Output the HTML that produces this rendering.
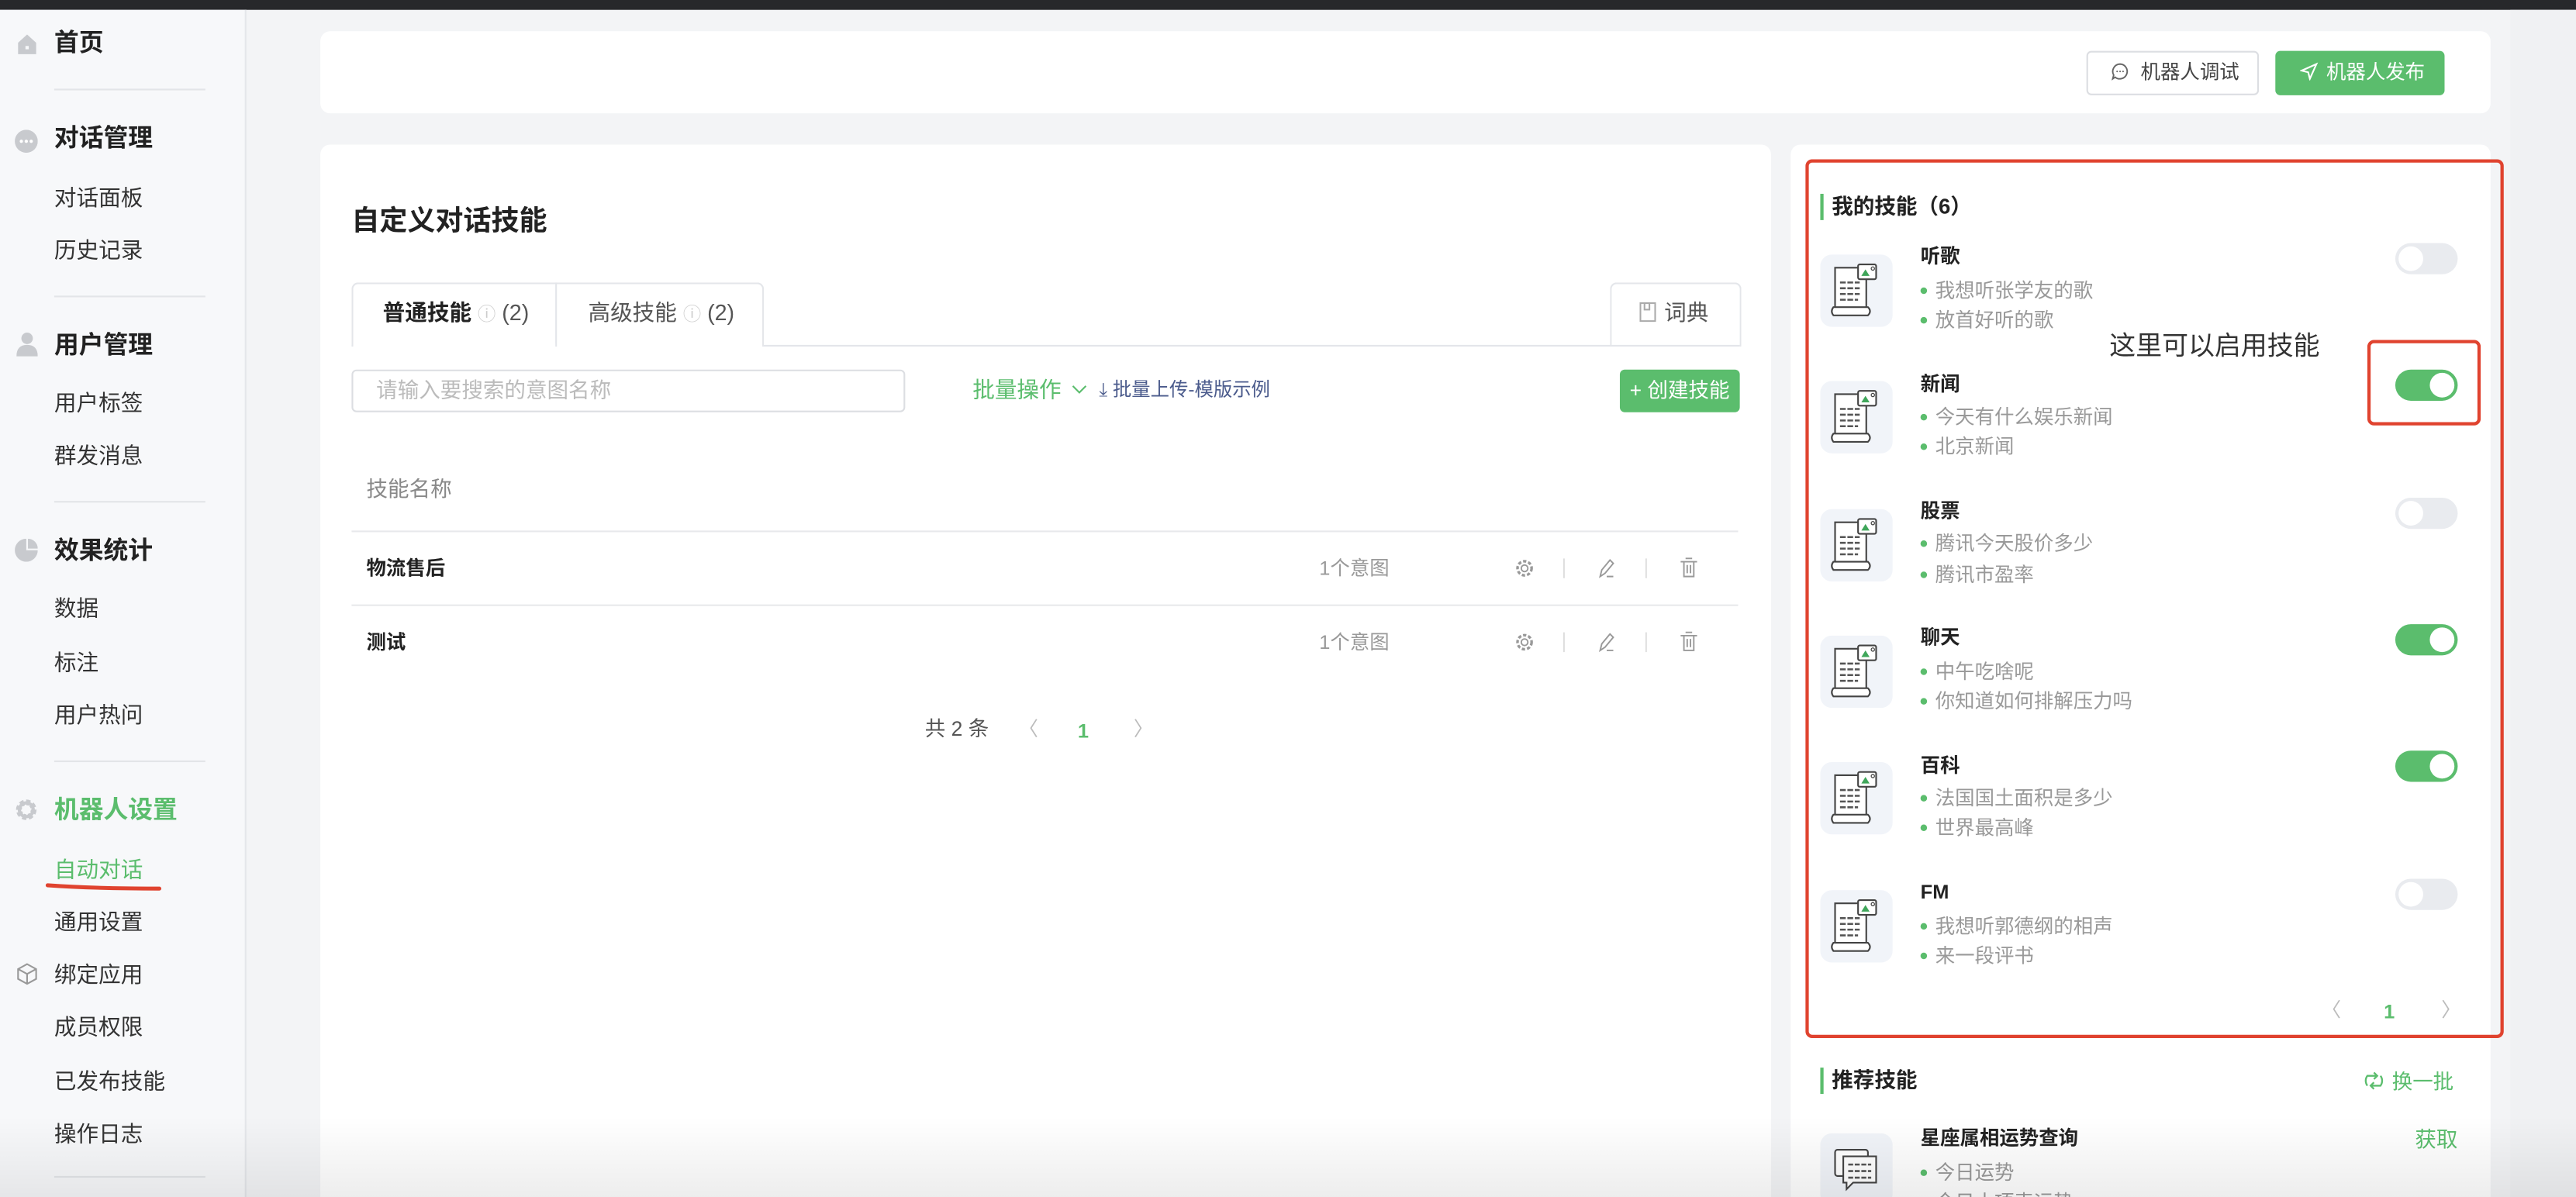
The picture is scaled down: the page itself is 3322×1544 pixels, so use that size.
<!DOCTYPE html>
<html><head><meta charset="utf-8">
<style>
html,body{margin:0;padding:0;width:3322px;height:1544px;overflow:hidden;background:#f3f4f6}
#w{position:absolute;left:0;top:0;width:1568px;height:729px;transform:scale(2.11862);transform-origin:0 0;font-family:"Liberation Sans","Noto Sans CJK SC",sans-serif;color:#333;background:#f3f4f6;overflow:hidden}
.a{position:absolute}
.t{position:absolute;white-space:nowrap;line-height:20px}
.card{position:absolute;background:#fff;border-radius:6px}
.div{position:absolute;left:33px;width:92px;height:1px;background:#e3e5e8}
.sh{font-size:15px;font-weight:bold;color:#222}
.si{font-size:13.5px;color:#333}
.tg{position:absolute;width:38px;height:19px;border-radius:10px;background:#e9ebef}
.tg::after{content:"";position:absolute;left:2px;top:2px;width:15px;height:15px;border-radius:50%;background:#fff}
.tg.on{background:#5bbd6d}
.tg.on::after{left:21px}
.ib{position:absolute;width:44px;height:44px;border-radius:7px;background:#f1f4f9}
.b{font-size:12px;color:#999}
.b::before{content:"";display:inline-block;width:4px;height:4px;border-radius:50%;background:#5bbd6d;margin-right:5px;vertical-align:middle;position:relative;top:-1px}
.it{font-size:12px;font-weight:bold;color:#222}
</style></head><body>
<div id="w">
<div class="a" style="left:0;top:0;width:1568px;height:6px;background:#27282b"></div>
<!-- sidebar -->
<div class="a" style="left:0;top:6px;width:149px;height:723px;background:#f7f8fa;border-right:1px solid #e4e6ea"></div>
<svg class="a" style="left:10px;top:20px" width="13" height="14" viewBox="0 0 13 14"><path d="M1 6 L6.5 1 L12 6 V13 H1Z" fill="#c8cace"/><rect x="5.5" y="8" width="2" height="2" fill="#f7f8fa"/></svg>
<div class="t sh" style="left:33px;top:17px">首页</div>
<div class="div" style="top:54px"></div>
<svg class="a" style="left:9px;top:79px" width="14" height="14"><circle cx="7" cy="7" r="7" fill="#c8cace"/><circle cx="4" cy="7" r="1" fill="#fff"/><circle cx="7" cy="7" r="1" fill="#fff"/><circle cx="10" cy="7" r="1" fill="#fff"/></svg>
<div class="t sh" style="left:33px;top:75px">对话管理</div>
<div class="t si" style="left:33px;top:111px">对话面板</div>
<div class="t si" style="left:33px;top:143px">历史记录</div>
<div class="div" style="top:180px"></div>
<svg class="a" style="left:10px;top:202px" width="13" height="15"><circle cx="6.5" cy="4" r="3.5" fill="#c8cace"/><path d="M0 15 Q0 8 6.5 8 Q13 8 13 15Z" fill="#c8cace"/></svg>
<div class="t sh" style="left:33px;top:201px">用户管理</div>
<div class="t si" style="left:33px;top:236px">用户标签</div>
<div class="t si" style="left:33px;top:268px">群发消息</div>
<div class="div" style="top:305px"></div>
<svg class="a" style="left:9px;top:328px" width="14" height="14"><path d="M7 0 A7 7 0 1 0 14 7 H7Z" fill="#c8cace"/><path d="M8 0 A6 6 0 0 1 14 6 H8Z" fill="#c8cace"/></svg>
<div class="t sh" style="left:33px;top:326px">效果统计</div>
<div class="t si" style="left:33px;top:361px">数据</div>
<div class="t si" style="left:33px;top:394px">标注</div>
<div class="t si" style="left:33px;top:426px">用户热问</div>
<div class="div" style="top:463px"></div>
<svg class="a" style="left:9px;top:486px" width="14" height="14" viewBox="0 0 14 14"><circle cx="7" cy="7" r="4.5" fill="none" stroke="#c8cace" stroke-width="3.5" stroke-dasharray="2.2 1.3"/><circle cx="7" cy="7" r="4.2" fill="none" stroke="#c8cace" stroke-width="2"/></svg>
<div class="t sh" style="left:33px;top:484px;color:#5bbd6d">机器人设置</div>
<div class="t si" style="left:33px;top:520px;color:#5bbd6d">自动对话</div>
<svg class="a" style="left:27px;top:536px" width="74" height="8"><path d="M2 3 Q30 5 70 5" stroke="#e0432f" stroke-width="2.4" fill="none" stroke-linecap="round"/></svg>
<div class="t si" style="left:33px;top:552px">通用设置</div>
<svg class="a" style="left:10px;top:586px" width="13" height="14" viewBox="0 0 13 14"><path d="M6.5 1 L12 4 V10 L6.5 13 L1 10 V4Z M1 4 L6.5 7 L12 4 M6.5 7 V13" fill="none" stroke="#999" stroke-width="1"/></svg>
<div class="t si" style="left:33px;top:584px">绑定应用</div>
<div class="t si" style="left:33px;top:616px">成员权限</div>
<div class="t si" style="left:33px;top:649px">已发布技能</div>
<div class="t si" style="left:33px;top:681px">操作日志</div>
<div class="div" style="top:716px;left:33px;width:92px"></div>
<div class="a" style="left:1528px;top:6px;width:40px;height:723px;background:#f0f1f3"></div>
<!-- top card -->
<div class="card" style="left:195px;top:19px;width:1321px;height:50px"></div>
<div class="a" style="left:1270px;top:31px;width:103px;height:25px;border:1px solid #dcdee2;border-radius:3px;background:#fff"></div>
<svg class="a" style="left:1285px;top:38px" width="11" height="11" viewBox="0 0 11 11"><path d="M5.5 1 A4.5 4.5 0 1 1 2.5 9 L1 10 L1.6 7.7 A4.5 4.5 0 0 1 5.5 1Z" fill="none" stroke="#666" stroke-width=".9"/><circle cx="3.7" cy="5.5" r=".5" fill="#666"/><circle cx="5.5" cy="5.5" r=".5" fill="#666"/><circle cx="7.3" cy="5.5" r=".5" fill="#666"/></svg>
<div class="t" style="left:1303px;top:34px;font-size:12px;color:#444">机器人调试</div>
<div class="a" style="left:1385px;top:31px;width:103px;height:27px;border-radius:3px;background:#5bbd6d"></div>
<svg class="a" style="left:1400px;top:38px" width="11" height="11" viewBox="0 0 11 11"><path d="M10 1 L1 5 L5 6 L6 10Z" fill="none" stroke="#fff" stroke-width="1"/></svg>
<div class="t" style="left:1416px;top:34px;font-size:12px;color:#fff">机器人发布</div>
<!-- left card -->
<div class="card" style="left:195px;top:88px;width:883px;height:660px"></div>
<div class="t" style="left:214px;top:125px;font-size:17px;font-weight:bold;color:#222">自定义对话技能</div>
<div class="a" style="left:214px;top:210px;width:845px;height:1px;background:#e4e6ea"></div>
<div class="a" style="left:214px;top:172px;width:249px;height:38px;border:1px solid #e4e6ea;border-bottom:none;border-radius:4px 4px 0 0;background:#fff"></div>
<div class="a" style="left:338px;top:172px;width:1px;height:39px;background:#e4e6ea"></div>
<div class="a" style="left:215px;top:209px;width:123px;height:3px;background:#fff"></div>
<div class="t" style="left:233px;top:181px;font-size:13.5px;font-weight:bold;color:#222">普通技能 <span style="font-weight:normal;color:#ccc;font-size:11px">ⓘ</span><span style="font-weight:normal;color:#555"> (2)</span></div>
<div class="t" style="left:358px;top:181px;font-size:13.5px;color:#555">高级技能 <span style="color:#ccc;font-size:11px">ⓘ</span> (2)</div>
<div class="a" style="left:980px;top:172px;width:78px;height:38px;border:1px solid #e4e6ea;border-bottom:none;border-radius:4px 4px 0 0"></div>
<svg class="a" style="left:998px;top:184px" width="10" height="12"><rect x=".5" y=".5" width="9" height="11" fill="none" stroke="#aaa"/><rect x="3" y=".5" width="3" height="4" fill="none" stroke="#aaa"/></svg>
<div class="t" style="left:1013px;top:181px;font-size:13.5px;color:#555">词典</div>
<div class="a" style="left:214px;top:225px;width:335px;height:24px;border:1px solid #dcdee2;border-radius:3px"></div>
<div class="t" style="left:229px;top:228px;font-size:13px;color:#bbb">请输入要搜索的意图名称</div>
<div class="t" style="left:592px;top:228px;font-size:13.5px;color:#5bbd6d">批量操作</div>
<svg class="a" style="left:652px;top:234px" width="10" height="7"><path d="M1 1 L5 5 L9 1" fill="none" stroke="#5bbd6d" stroke-width="1"/></svg>
<div class="t" style="left:669px;top:228px;font-size:11.5px;color:#4b5b8c">⤓ 批量上传-模版示例</div>
<div class="a" style="left:986px;top:225px;width:73px;height:26px;border-radius:3px;background:#5bbd6d"></div>
<div class="t" style="left:992px;top:228px;font-size:12.5px;color:#fff">+ 创建技能</div>
<div class="t" style="left:223px;top:288px;font-size:13px;color:#888">技能名称</div>
<div class="a" style="left:214px;top:323px;width:844px;height:1px;background:#e8e9ec"></div>
<div class="t" style="left:223px;top:336px;font-size:12px;font-weight:bold;color:#222">物流售后</div>
<div class="t" style="left:803px;top:336px;font-size:12px;color:#999">1个意图</div>
<div class="a" style="left:214px;top:368px;width:844px;height:1px;background:#e8e9ec"></div>
<div class="t" style="left:223px;top:381px;font-size:12px;font-weight:bold;color:#222">测试</div>
<div class="t" style="left:803px;top:381px;font-size:12px;color:#999">1个意图</div>
<svg class="a" style="left:920px;top:338px" width="120" height="60" viewBox="0 0 120 60">
<g fill="none" stroke="#999" stroke-width=".9">
<g><circle cx="8" cy="8" r="2"/><circle cx="8" cy="8" r="4.3" stroke-dasharray="2 1.2" stroke-width="1.6"/><path d="M32 2 V14 M82 2 V14" stroke="#ddd"/><path d="M54 13 L55 9 L60 3 L62 5 L57 11Z M58 13 H62 M103 4 H113 M105 4 V13 H111 V4 M106 2 H110 M107 6 V11 M109 6 V11"/></g>
<g transform="translate(0,45)"><circle cx="8" cy="8" r="2"/><circle cx="8" cy="8" r="4.3" stroke-dasharray="2 1.2" stroke-width="1.6"/><path d="M32 2 V14 M82 2 V14" stroke="#ddd"/><path d="M54 13 L55 9 L60 3 L62 5 L57 11Z M58 13 H62 M103 4 H113 M105 4 V13 H111 V4 M106 2 H110 M107 6 V11 M109 6 V11"/></g>
</g></svg>
<div class="t" style="left:563px;top:434px;font-size:12.5px;color:#555">共 2 条</div>
<div class="t" style="left:620px;top:434px;font-size:12px;color:#bbb">〈</div>
<div class="t" style="left:656px;top:435px;font-size:12px;font-weight:bold;color:#5bbd6d">1</div>
<div class="t" style="left:690px;top:434px;font-size:12px;color:#bbb">〉</div>
<!-- right card -->
<div class="card" style="left:1090px;top:88px;width:426px;height:660px"></div>
<div class="a" style="left:1099px;top:97px;width:421px;height:531px;border:2px solid #e0432f;border-radius:4px"></div>
<div class="a" style="left:1108px;top:118px;width:2px;height:16px;background:#5bbd6d"></div>
<div class="t" style="left:1115px;top:116px;font-size:13px;font-weight:bold;color:#222">我的技能（6）</div>

<svg width="0" height="0" style="position:absolute"><defs><g id="doc"><path d="M9 8 H28 V35 H9Z" fill="#fff" stroke="#444" stroke-width="1"/><path d="M8 32 H29 Q31.5 34.5 29 37 H8 Q6 34.5 8 32Z" fill="#fff" stroke="#444" stroke-width="1"/><rect x="23" y="6" width="11" height="9" rx="1" fill="#fff" stroke="#444" stroke-width="1"/><path d="M25 13 L27.5 9 L30 13Z" fill="#3fa65a"/><circle cx="32" cy="8.5" r="1" fill="none" stroke="#444" stroke-width=".6"/><path d="M12 17 H24 M12 20.5 H24 M12 24 H24 M12 27.5 H23" stroke="#555" stroke-width="1.2" stroke-dasharray="3.5 1"/></g></defs></svg>

<div class="ib" style="left:1108px;top:155px"></div><svg class="a" style="left:1108px;top:155px" width="44" height="44"><use href="#doc"/></svg>
<div class="t it" style="left:1169px;top:146px">听歌</div>
<div class="t b" style="left:1169px;top:167px">我想听张学友的歌</div>
<div class="t b" style="left:1169px;top:185px">放首好听的歌</div>
<div class="tg" style="left:1458px;top:148px"></div>

<div class="t" style="left:1284px;top:202px;font-size:16px;color:#333">这里可以启用技能</div>
<div class="a" style="left:1441px;top:207px;width:65px;height:48px;border:2px solid #e0432f;border-radius:4px"></div>

<div class="ib" style="left:1108px;top:232px"></div><svg class="a" style="left:1108px;top:232px" width="44" height="44"><use href="#doc"/></svg>
<div class="t it" style="left:1169px;top:224px">新闻</div>
<div class="t b" style="left:1169px;top:244px">今天有什么娱乐新闻</div>
<div class="t b" style="left:1169px;top:262px">北京新闻</div>
<div class="tg on" style="left:1458px;top:225px"></div>

<div class="ib" style="left:1108px;top:310px"></div><svg class="a" style="left:1108px;top:310px" width="44" height="44"><use href="#doc"/></svg>
<div class="t it" style="left:1169px;top:301px">股票</div>
<div class="t b" style="left:1169px;top:321px">腾讯今天股价多少</div>
<div class="t b" style="left:1169px;top:340px">腾讯市盈率</div>
<div class="tg" style="left:1458px;top:303px"></div>

<div class="ib" style="left:1108px;top:387px"></div><svg class="a" style="left:1108px;top:387px" width="44" height="44"><use href="#doc"/></svg>
<div class="t it" style="left:1169px;top:378px">聊天</div>
<div class="t b" style="left:1169px;top:399px">中午吃啥呢</div>
<div class="t b" style="left:1169px;top:417px">你知道如何排解压力吗</div>
<div class="tg on" style="left:1458px;top:380px"></div>

<div class="ib" style="left:1108px;top:464px"></div><svg class="a" style="left:1108px;top:464px" width="44" height="44"><use href="#doc"/></svg>
<div class="t it" style="left:1169px;top:456px">百科</div>
<div class="t b" style="left:1169px;top:476px">法国国土面积是多少</div>
<div class="t b" style="left:1169px;top:494px">世界最高峰</div>
<div class="tg on" style="left:1458px;top:457px"></div>

<div class="ib" style="left:1108px;top:542px"></div><svg class="a" style="left:1108px;top:542px" width="44" height="44"><use href="#doc"/></svg>
<div class="t it" style="left:1169px;top:533px">FM</div>
<div class="t b" style="left:1169px;top:554px">我想听郭德纲的相声</div>
<div class="t b" style="left:1169px;top:572px">来一段评书</div>
<div class="tg" style="left:1458px;top:535px"></div>

<div class="t" style="left:1413px;top:605px;font-size:12px;color:#bbb">〈</div>
<div class="t" style="left:1451px;top:606px;font-size:12px;font-weight:bold;color:#5bbd6d">1</div>
<div class="t" style="left:1486px;top:605px;font-size:12px;color:#bbb">〉</div>

<div class="a" style="left:1108px;top:650px;width:2px;height:16px;background:#5bbd6d"></div>
<div class="t" style="left:1115px;top:648px;font-size:13px;font-weight:bold;color:#222">推荐技能</div>
<svg class="a" style="left:1438px;top:651px" width="14" height="14" viewBox="0 0 14 14"><path d="M3 10 A5 5 0 0 1 3 4 L9 4 M7 2 L9 4 L7 6 M11 4 A5 5 0 0 1 11 10 L5 10 M7 8 L5 10 L7 12" fill="none" stroke="#5bbd6d" stroke-width="1.1"/></svg>
<div class="t" style="left:1456px;top:649px;font-size:12.5px;color:#5bbd6d">换一批</div>
<div class="ib" style="left:1108px;top:690px"></div>
<svg class="a" style="left:1108px;top:690px" width="44" height="44" viewBox="0 0 44 44"><rect x="9" y="10" width="20" height="16" rx="1.5" fill="#fff" stroke="#444" stroke-width="1"/><path d="M14 14 H34 V30 H20 L16 34 V30 H14Z" fill="#fff" stroke="#444" stroke-width="1"/><path d="M17 19 H31 M17 23 H31 M17 27 H31" stroke="#555" stroke-width="1.2" stroke-dasharray="3 1"/></svg>
<div class="t it" style="left:1169px;top:683px">星座属相运势查询</div>
<div class="t" style="left:1470px;top:684px;font-size:13px;color:#5bbd6d">获取</div>
<div class="t b" style="left:1169px;top:704px">今日运势</div>
<div class="t b" style="left:1169px;top:722px">今日小项表运势</div>
<div class="a" style="left:0;top:680px;width:1568px;height:49px;background:linear-gradient(to bottom,rgba(0,0,0,0),rgba(0,0,0,0.07))"></div>
</div>
</body></html>
